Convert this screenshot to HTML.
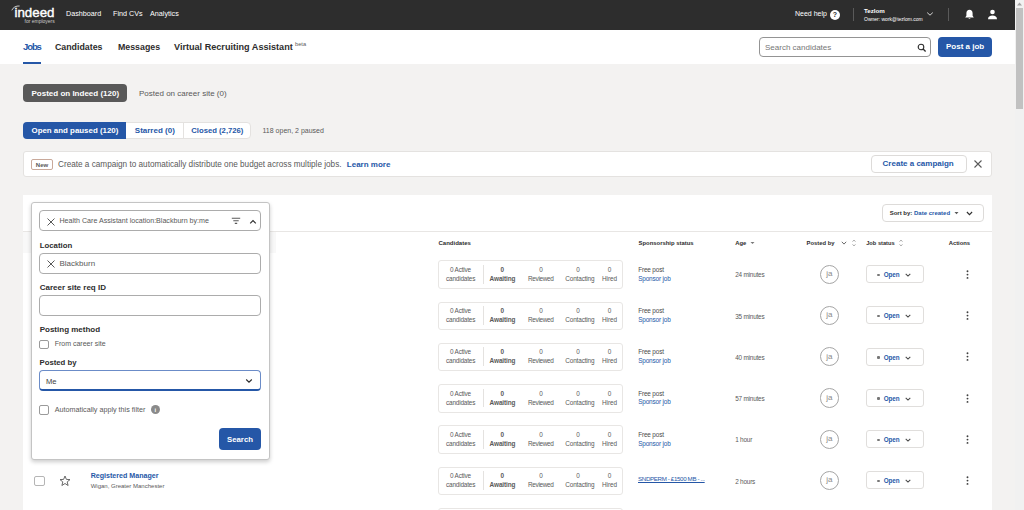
<!DOCTYPE html>
<html><head><meta charset="utf-8">
<style>
*{box-sizing:border-box;margin:0;padding:0}
html,body{width:1024px;height:510px;overflow:hidden;background:#f3f2f1;font-family:"Liberation Sans",sans-serif;color:#2d2d2d}
.a{position:absolute}
.t{position:absolute;white-space:nowrap;line-height:10px}
.b{font-weight:700}
.blue{color:#2557a7}
#hdr{left:0;top:0;width:1015px;height:30px;background:#2d2d2d}
#nav{left:0;top:30px;width:1015px;height:34px;background:#fff}
#sb{left:1015px;top:0;width:9px;height:510px;background:#f1f1f1}
#thumb{left:1016px;top:8px;width:7px;height:101px;background:#c1c1c1}
.card{background:#fff}
.inp{position:absolute;border:1px solid #acacac;border-radius:4px;background:#fff}
.cb{position:absolute;width:10px;height:10px;border:1px solid #9a9a9a;border-radius:2px;background:#fff}
.cbox{position:absolute;left:438px;width:185px;height:28.6px;border:1px solid #e8e6e4;border-radius:3px;background:#fff}
.cbox .t{font-size:6px;color:#595959}
.stat{position:absolute;left:866px;width:58px;height:18px;border:1px solid #e0dedc;border-radius:3px;background:#fff}
.av{position:absolute;left:819.7px;width:19.3px;height:19.3px;border:1px solid #a5a5a5;border-radius:50%;background:#fff}
</style></head><body>
<!-- header -->
<div class="a" id="hdr"></div>
<div class="t" style="left:14.5px;top:4.8px;font-size:13.3px;line-height:16px;color:#fff;-webkit-text-stroke:0.4px #fff">indeed</div>
<div class="t" style="left:24.5px;top:17px;font-size:5px;line-height:8px;color:#ccc">for employers</div>
<div class="t" style="left:66px;top:9px;font-size:7.2px;color:#fff">Dashboard</div>
<div class="t" style="left:113px;top:9px;font-size:7.2px;color:#fff">Find CVs</div>
<div class="t" style="left:150px;top:9px;font-size:7.2px;color:#fff">Analytics</div>
<div class="t" style="left:795px;top:9px;font-size:7px;color:#fff">Need help</div>
<div class="a" style="left:830px;top:10px;width:10px;height:10px;border-radius:50%;background:#fff"></div>
<div class="t b" style="left:830px;top:10px;width:10px;font-size:7px;color:#2d2d2d;text-align:center">?</div>
<div class="a" style="left:853px;top:8px;width:1px;height:12.5px;background:#5a5a5a"></div>
<div class="t b" style="left:864px;top:6.2px;font-size:6.2px;color:#fff">Tezlom</div>
<div class="t" style="left:864px;top:13.8px;font-size:5px;color:#fff">Owner: work@tezlom.com</div>
<div class="a" style="left:947.5px;top:8px;width:1px;height:12.5px;background:#5a5a5a"></div>


<!-- header icons -->
<svg class="a" style="left:926px;top:11px" width="8" height="6" viewBox="0 0 8 6"><path d="M1.2 1.6L4 4.2L6.8 1.6" stroke="#fff" stroke-width="0.8" fill="none"/></svg>
<svg class="a" style="left:964px;top:9px" width="11" height="11" viewBox="0 0 11 11"><path d="M5.5 0.8C3.6 0.8 2.4 2.2 2.4 4.2V6.8L1.2 8.4H9.8L8.6 6.8V4.2C8.6 2.2 7.4 0.8 5.5 0.8Z" fill="#fff"/><path d="M4.3 9.2Q5.5 10.6 6.7 9.2Z" fill="#fff"/></svg>
<svg class="a" style="left:987px;top:9px" width="11" height="11" viewBox="0 0 11 11"><circle cx="5.5" cy="3" r="2.3" fill="#fff"/><path d="M1 10.2C1 7.6 2.8 6.4 5.5 6.4C8.2 6.4 10 7.6 10 10.2Z" fill="#fff"/></svg>
<svg class="a" style="left:10px;top:4px" width="12" height="8" viewBox="0 0 12 8"><path d="M1.8 6.3Q4 1.6 9.6 2" stroke="#ddd" stroke-width="0.9" fill="none"/></svg>

<!-- nav -->
<div class="a" id="nav"></div>
<div class="t b blue" style="left:23px;top:41px;font-size:9.5px;line-height:12px;letter-spacing:-1.1px">Jobs</div>
<div class="a" style="left:23px;top:62px;width:18px;height:2px;background:#2557a7"></div>
<div class="t b" style="left:55px;top:41px;font-size:8.8px;line-height:12px">Candidates</div>
<div class="t b" style="left:118px;top:41px;font-size:8.8px;line-height:12px">Messages</div>
<div class="t b" style="left:174px;top:41px;font-size:9.1px;line-height:12px">Virtual Recruiting Assistant</div>
<div class="t" style="left:295px;top:40.5px;font-size:5.7px;line-height:6px;color:#595959">beta</div>
<div class="inp" style="left:759px;top:37px;width:172px;height:20px;border-color:#949494"></div>
<div class="t" style="left:765px;top:42.7px;font-size:8px;color:#767676">Search candidates</div>
<svg class="a" style="left:916.5px;top:42.5px" width="10" height="10" viewBox="0 0 10 10"><circle cx="4" cy="4" r="2.8" stroke="#2d2d2d" stroke-width="1.1" fill="none"/><path d="M6.1 6.1L8.6 8.6" stroke="#2d2d2d" stroke-width="1.4"/></svg>
<div class="a" style="left:938px;top:37px;width:54px;height:20px;border-radius:4px;background:#2557a7"></div>
<div class="t b" style="left:946px;top:42.4px;font-size:8px;color:#fff">Post a job</div>


<!-- posted tabs -->
<div class="a" style="left:23px;top:84px;width:104px;height:18px;border-radius:4px;background:#595959"></div>
<div class="t b" style="left:31.5px;top:88.6px;font-size:8px;color:#fff">Posted on Indeed (120)</div>
<div class="t" style="left:139px;top:88.6px;font-size:8px;color:#595959">Posted on career site (0)</div>

<!-- segmented -->
<div class="a" style="left:23px;top:122px;width:228px;height:17px;border:1px solid #e4e2e0;border-radius:4px;background:#fff"></div>
<div class="a" style="left:23px;top:122px;width:103px;height:17px;border-radius:4px 0 0 4px;background:#2557a7"></div>
<div class="a" style="left:183px;top:123px;width:1px;height:15px;background:#e4e2e0"></div>
<div class="t b" style="left:31.5px;top:125.5px;font-size:7.9px;color:#fff">Open and paused (120)</div>
<div class="t b blue" style="left:134.8px;top:125.5px;font-size:8px">Starred (0)</div>
<div class="t b blue" style="left:191.3px;top:125.5px;font-size:7.7px">Closed (2,726)</div>
<div class="t" style="left:262.5px;top:125.7px;font-size:7px;color:#595959">118 open, 2 paused</div>

<!-- banner -->
<div class="a" style="left:23px;top:151px;width:969px;height:26px;border:1px solid #e4e2e0;border-radius:3px;background:#fff"></div>
<div class="a" style="left:31px;top:158.5px;width:22px;height:11.5px;border:1px solid #c9a99a;border-radius:2px;background:#fff"></div>
<div class="t" style="left:31px;top:160px;width:22px;font-size:6px;font-weight:700;color:#595959;text-align:center">New</div>
<div class="t" style="left:58px;top:159.6px;font-size:8.2px;color:#595959">Create a campaign to automatically distribute one budget across multiple jobs.</div>
<div class="t b blue" style="left:346.8px;top:159.6px;font-size:8px">Learn more</div>
<div class="a" style="left:870.5px;top:155px;width:96px;height:18px;border:1px solid #dddbd9;border-radius:4px;background:#fff"></div>
<div class="t b blue" style="left:882.6px;top:158.8px;font-size:8px">Create a campaign</div>
<svg class="a" style="left:973px;top:159px" width="10" height="10" viewBox="0 0 10 10"><path d="M1.5 1.5L8.5 8.5M8.5 1.5L1.5 8.5" stroke="#595959" stroke-width="1.1"/></svg>

<!-- main card -->
<div class="a card" style="left:23px;top:195px;width:969px;height:320px"></div>
<div class="a" style="left:881.5px;top:204px;width:102.5px;height:17.5px;border:1px solid #dddbd9;border-radius:4px;background:#fff"></div>
<div class="t b" style="left:889.7px;top:207.8px;font-size:6px"><span>Sort by:</span> <span class="blue">Date created</span></div>
<svg class="a" style="left:953.5px;top:211px" width="5" height="4" viewBox="0 0 5 4"><path d="M0.5 1L4.5 1L2.5 3.2Z" fill="#595959"/></svg>
<svg class="a" style="left:966.2px;top:210.8px" width="7" height="5" viewBox="0 0 7 5"><path d="M0.9 1L3.5 3.7L6.1 1" stroke="#2d2d2d" stroke-width="1.1" fill="none"/></svg>
<div class="a" style="left:23px;top:231px;width:969px;height:1px;background:#e8e6e4"></div>
<div class="a" style="left:23px;top:232px;width:253px;height:21px;background:#f8f8f8"></div>

<!-- table header -->
<div class="t b" style="left:438.5px;top:237.8px;font-size:6px">Candidates</div>
<div class="t b" style="left:638.6px;top:237.8px;font-size:5.9px">Sponsorship status</div>
<div class="t b" style="left:735.2px;top:237.8px;font-size:5.9px">Age</div>
<svg class="a" style="left:750px;top:241px" width="5" height="4" viewBox="0 0 5 4"><path d="M0.5 1L4.5 1L2.5 3Z" fill="#767676"/></svg>
<div class="t b" style="left:806.6px;top:237.8px;font-size:5.85px">Posted by</div>
<svg class="a" style="left:840.5px;top:240.5px" width="6" height="4" viewBox="0 0 6 4"><path d="M0.8 0.8L3 3.1L5.2 0.8" stroke="#595959" stroke-width="0.9" fill="none"/></svg>
<svg class="a" style="left:852px;top:238.5px" width="4" height="8" viewBox="0 0 4 8"><path d="M0.6 2.6L2 1.1L3.4 2.6M0.6 5.4L2 6.9L3.4 5.4" stroke="#8a8a8a" stroke-width="0.8" fill="none"/></svg>
<div class="t b" style="left:866.2px;top:237.8px;font-size:5.7px">Job status</div>
<svg class="a" style="left:899px;top:238.5px" width="4" height="8" viewBox="0 0 4 8"><path d="M0.6 2.6L2 1.1L3.4 2.6M0.6 5.4L2 6.9L3.4 5.4" stroke="#8a8a8a" stroke-width="0.8" fill="none"/></svg>
<div class="t b" style="left:948.7px;top:237.8px;font-size:5.85px">Actions</div>


<!-- rows -->
<div class="cbox" style="top:260.30px"><div class="t" style="left:11.0px;top:3.7px;font-size:6.4px;letter-spacing:-0.18px">0 Active</div><div class="t" style="left:7.0px;top:12.6px;font-size:6.4px;letter-spacing:-0.17px">candidates</div><div class="a" style="left:43.7px;top:3.7px;width:1px;height:18.6px;background:#e4e2e0"></div><div class="t b" style="left:61.5px;top:3.7px;font-size:6.4px;letter-spacing:0px">0</div><div class="t b" style="left:50.6px;top:12.6px;font-size:6.4px;letter-spacing:-0.09px">Awaiting</div><div class="t" style="left:100.3px;top:3.7px;font-size:6.4px;letter-spacing:0px">0</div><div class="t" style="left:89.0px;top:12.6px;font-size:6.4px;letter-spacing:-0.31px">Reviewed</div><div class="t" style="left:137.3px;top:3.7px;font-size:6.4px;letter-spacing:0px">0</div><div class="t" style="left:126.3px;top:12.6px;font-size:6.4px;letter-spacing:-0.14px">Contacting</div><div class="t" style="left:168.8px;top:3.7px;font-size:6.4px;letter-spacing:0px">0</div><div class="t" style="left:162.9px;top:12.6px;font-size:6.4px;letter-spacing:-0.02px">Hired</div></div>
<div class="t" style="left:638.2px;top:264.80px;font-size:6.4px;letter-spacing:-0.15px;color:#4b4b4b">Free post</div>
<div class="t blue" style="left:638.2px;top:273.50px;font-size:6.4px;letter-spacing:-0.15px">Sponsor job</div>
<div class="t" style="left:735.2px;top:270.30px;font-size:6.4px;letter-spacing:-0.2px;color:#595959">24 minutes</div>
<div class="av" style="top:264.60px"></div>
<div class="t" style="left:819.7px;width:19.3px;top:269.20px;font-size:8px;color:#8a8a8a;text-align:center">ja</div>
<div class="stat" style="top:265.10px"></div>
<div class="a" style="left:877px;top:273.50px;width:2.6px;height:2.6px;background:#777;border-radius:1px"></div>
<div class="t b blue" style="left:883.75px;top:270.00px;font-size:6.3px;letter-spacing:-0.1px">Open</div>
<svg class="a" style="left:904.5px;top:273.00px" width="6" height="4" viewBox="0 0 6 4"><path d="M0.7 0.9L3 3.1L5.3 0.9" stroke="#4a4a4a" stroke-width="1.1" fill="none"/></svg>
<svg class="a" style="left:966px;top:269.80px" width="3" height="10" viewBox="0 0 3 10"><circle cx="1.5" cy="1.3" r="0.95" fill="#404040"/><circle cx="1.5" cy="4.6" r="0.95" fill="#404040"/><circle cx="1.5" cy="7.9" r="0.95" fill="#404040"/></svg>
<div class="cbox" style="top:301.55px"><div class="t" style="left:11.0px;top:3.7px;font-size:6.4px;letter-spacing:-0.18px">0 Active</div><div class="t" style="left:7.0px;top:12.6px;font-size:6.4px;letter-spacing:-0.17px">candidates</div><div class="a" style="left:43.7px;top:3.7px;width:1px;height:18.6px;background:#e4e2e0"></div><div class="t b" style="left:61.5px;top:3.7px;font-size:6.4px;letter-spacing:0px">0</div><div class="t b" style="left:50.6px;top:12.6px;font-size:6.4px;letter-spacing:-0.09px">Awaiting</div><div class="t" style="left:100.3px;top:3.7px;font-size:6.4px;letter-spacing:0px">0</div><div class="t" style="left:89.0px;top:12.6px;font-size:6.4px;letter-spacing:-0.31px">Reviewed</div><div class="t" style="left:137.3px;top:3.7px;font-size:6.4px;letter-spacing:0px">0</div><div class="t" style="left:126.3px;top:12.6px;font-size:6.4px;letter-spacing:-0.14px">Contacting</div><div class="t" style="left:168.8px;top:3.7px;font-size:6.4px;letter-spacing:0px">0</div><div class="t" style="left:162.9px;top:12.6px;font-size:6.4px;letter-spacing:-0.02px">Hired</div></div>
<div class="t" style="left:638.2px;top:306.05px;font-size:6.4px;letter-spacing:-0.15px;color:#4b4b4b">Free post</div>
<div class="t blue" style="left:638.2px;top:314.75px;font-size:6.4px;letter-spacing:-0.15px">Sponsor job</div>
<div class="t" style="left:735.2px;top:311.55px;font-size:6.4px;letter-spacing:-0.2px;color:#595959">35 minutes</div>
<div class="av" style="top:305.85px"></div>
<div class="t" style="left:819.7px;width:19.3px;top:310.45px;font-size:8px;color:#8a8a8a;text-align:center">ja</div>
<div class="stat" style="top:306.35px"></div>
<div class="a" style="left:877px;top:314.75px;width:2.6px;height:2.6px;background:#777;border-radius:1px"></div>
<div class="t b blue" style="left:883.75px;top:311.25px;font-size:6.3px;letter-spacing:-0.1px">Open</div>
<svg class="a" style="left:904.5px;top:314.25px" width="6" height="4" viewBox="0 0 6 4"><path d="M0.7 0.9L3 3.1L5.3 0.9" stroke="#4a4a4a" stroke-width="1.1" fill="none"/></svg>
<svg class="a" style="left:966px;top:311.05px" width="3" height="10" viewBox="0 0 3 10"><circle cx="1.5" cy="1.3" r="0.95" fill="#404040"/><circle cx="1.5" cy="4.6" r="0.95" fill="#404040"/><circle cx="1.5" cy="7.9" r="0.95" fill="#404040"/></svg>
<div class="cbox" style="top:342.80px"><div class="t" style="left:11.0px;top:3.7px;font-size:6.4px;letter-spacing:-0.18px">0 Active</div><div class="t" style="left:7.0px;top:12.6px;font-size:6.4px;letter-spacing:-0.17px">candidates</div><div class="a" style="left:43.7px;top:3.7px;width:1px;height:18.6px;background:#e4e2e0"></div><div class="t b" style="left:61.5px;top:3.7px;font-size:6.4px;letter-spacing:0px">0</div><div class="t b" style="left:50.6px;top:12.6px;font-size:6.4px;letter-spacing:-0.09px">Awaiting</div><div class="t" style="left:100.3px;top:3.7px;font-size:6.4px;letter-spacing:0px">0</div><div class="t" style="left:89.0px;top:12.6px;font-size:6.4px;letter-spacing:-0.31px">Reviewed</div><div class="t" style="left:137.3px;top:3.7px;font-size:6.4px;letter-spacing:0px">0</div><div class="t" style="left:126.3px;top:12.6px;font-size:6.4px;letter-spacing:-0.14px">Contacting</div><div class="t" style="left:168.8px;top:3.7px;font-size:6.4px;letter-spacing:0px">0</div><div class="t" style="left:162.9px;top:12.6px;font-size:6.4px;letter-spacing:-0.02px">Hired</div></div>
<div class="t" style="left:638.2px;top:347.30px;font-size:6.4px;letter-spacing:-0.15px;color:#4b4b4b">Free post</div>
<div class="t blue" style="left:638.2px;top:356.00px;font-size:6.4px;letter-spacing:-0.15px">Sponsor job</div>
<div class="t" style="left:735.2px;top:352.80px;font-size:6.4px;letter-spacing:-0.2px;color:#595959">40 minutes</div>
<div class="av" style="top:347.10px"></div>
<div class="t" style="left:819.7px;width:19.3px;top:351.70px;font-size:8px;color:#8a8a8a;text-align:center">ja</div>
<div class="stat" style="top:347.60px"></div>
<div class="a" style="left:877px;top:356.00px;width:2.6px;height:2.6px;background:#777;border-radius:1px"></div>
<div class="t b blue" style="left:883.75px;top:352.50px;font-size:6.3px;letter-spacing:-0.1px">Open</div>
<svg class="a" style="left:904.5px;top:355.50px" width="6" height="4" viewBox="0 0 6 4"><path d="M0.7 0.9L3 3.1L5.3 0.9" stroke="#4a4a4a" stroke-width="1.1" fill="none"/></svg>
<svg class="a" style="left:966px;top:352.30px" width="3" height="10" viewBox="0 0 3 10"><circle cx="1.5" cy="1.3" r="0.95" fill="#404040"/><circle cx="1.5" cy="4.6" r="0.95" fill="#404040"/><circle cx="1.5" cy="7.9" r="0.95" fill="#404040"/></svg>
<div class="cbox" style="top:384.05px"><div class="t" style="left:11.0px;top:3.7px;font-size:6.4px;letter-spacing:-0.18px">0 Active</div><div class="t" style="left:7.0px;top:12.6px;font-size:6.4px;letter-spacing:-0.17px">candidates</div><div class="a" style="left:43.7px;top:3.7px;width:1px;height:18.6px;background:#e4e2e0"></div><div class="t b" style="left:61.5px;top:3.7px;font-size:6.4px;letter-spacing:0px">0</div><div class="t b" style="left:50.6px;top:12.6px;font-size:6.4px;letter-spacing:-0.09px">Awaiting</div><div class="t" style="left:100.3px;top:3.7px;font-size:6.4px;letter-spacing:0px">0</div><div class="t" style="left:89.0px;top:12.6px;font-size:6.4px;letter-spacing:-0.31px">Reviewed</div><div class="t" style="left:137.3px;top:3.7px;font-size:6.4px;letter-spacing:0px">0</div><div class="t" style="left:126.3px;top:12.6px;font-size:6.4px;letter-spacing:-0.14px">Contacting</div><div class="t" style="left:168.8px;top:3.7px;font-size:6.4px;letter-spacing:0px">0</div><div class="t" style="left:162.9px;top:12.6px;font-size:6.4px;letter-spacing:-0.02px">Hired</div></div>
<div class="t" style="left:638.2px;top:388.55px;font-size:6.4px;letter-spacing:-0.15px;color:#4b4b4b">Free post</div>
<div class="t blue" style="left:638.2px;top:397.25px;font-size:6.4px;letter-spacing:-0.15px">Sponsor job</div>
<div class="t" style="left:735.2px;top:394.05px;font-size:6.4px;letter-spacing:-0.2px;color:#595959">57 minutes</div>
<div class="av" style="top:388.35px"></div>
<div class="t" style="left:819.7px;width:19.3px;top:392.95px;font-size:8px;color:#8a8a8a;text-align:center">ja</div>
<div class="stat" style="top:388.85px"></div>
<div class="a" style="left:877px;top:397.25px;width:2.6px;height:2.6px;background:#777;border-radius:1px"></div>
<div class="t b blue" style="left:883.75px;top:393.75px;font-size:6.3px;letter-spacing:-0.1px">Open</div>
<svg class="a" style="left:904.5px;top:396.75px" width="6" height="4" viewBox="0 0 6 4"><path d="M0.7 0.9L3 3.1L5.3 0.9" stroke="#4a4a4a" stroke-width="1.1" fill="none"/></svg>
<svg class="a" style="left:966px;top:393.55px" width="3" height="10" viewBox="0 0 3 10"><circle cx="1.5" cy="1.3" r="0.95" fill="#404040"/><circle cx="1.5" cy="4.6" r="0.95" fill="#404040"/><circle cx="1.5" cy="7.9" r="0.95" fill="#404040"/></svg>
<div class="cbox" style="top:425.30px"><div class="t" style="left:11.0px;top:3.7px;font-size:6.4px;letter-spacing:-0.18px">0 Active</div><div class="t" style="left:7.0px;top:12.6px;font-size:6.4px;letter-spacing:-0.17px">candidates</div><div class="a" style="left:43.7px;top:3.7px;width:1px;height:18.6px;background:#e4e2e0"></div><div class="t b" style="left:61.5px;top:3.7px;font-size:6.4px;letter-spacing:0px">0</div><div class="t b" style="left:50.6px;top:12.6px;font-size:6.4px;letter-spacing:-0.09px">Awaiting</div><div class="t" style="left:100.3px;top:3.7px;font-size:6.4px;letter-spacing:0px">0</div><div class="t" style="left:89.0px;top:12.6px;font-size:6.4px;letter-spacing:-0.31px">Reviewed</div><div class="t" style="left:137.3px;top:3.7px;font-size:6.4px;letter-spacing:0px">0</div><div class="t" style="left:126.3px;top:12.6px;font-size:6.4px;letter-spacing:-0.14px">Contacting</div><div class="t" style="left:168.8px;top:3.7px;font-size:6.4px;letter-spacing:0px">0</div><div class="t" style="left:162.9px;top:12.6px;font-size:6.4px;letter-spacing:-0.02px">Hired</div></div>
<div class="t" style="left:638.2px;top:429.80px;font-size:6.4px;letter-spacing:-0.15px;color:#4b4b4b">Free post</div>
<div class="t blue" style="left:638.2px;top:438.50px;font-size:6.4px;letter-spacing:-0.15px">Sponsor job</div>
<div class="t" style="left:735.2px;top:435.30px;font-size:6.4px;letter-spacing:-0.2px;color:#595959">1 hour</div>
<div class="av" style="top:429.60px"></div>
<div class="t" style="left:819.7px;width:19.3px;top:434.20px;font-size:8px;color:#8a8a8a;text-align:center">ja</div>
<div class="stat" style="top:430.10px"></div>
<div class="a" style="left:877px;top:438.50px;width:2.6px;height:2.6px;background:#777;border-radius:1px"></div>
<div class="t b blue" style="left:883.75px;top:435.00px;font-size:6.3px;letter-spacing:-0.1px">Open</div>
<svg class="a" style="left:904.5px;top:438.00px" width="6" height="4" viewBox="0 0 6 4"><path d="M0.7 0.9L3 3.1L5.3 0.9" stroke="#4a4a4a" stroke-width="1.1" fill="none"/></svg>
<svg class="a" style="left:966px;top:434.80px" width="3" height="10" viewBox="0 0 3 10"><circle cx="1.5" cy="1.3" r="0.95" fill="#404040"/><circle cx="1.5" cy="4.6" r="0.95" fill="#404040"/><circle cx="1.5" cy="7.9" r="0.95" fill="#404040"/></svg>
<div class="cbox" style="top:466.55px"><div class="t" style="left:11.0px;top:3.7px;font-size:6.4px;letter-spacing:-0.18px">0 Active</div><div class="t" style="left:7.0px;top:12.6px;font-size:6.4px;letter-spacing:-0.17px">candidates</div><div class="a" style="left:43.7px;top:3.7px;width:1px;height:18.6px;background:#e4e2e0"></div><div class="t b" style="left:61.5px;top:3.7px;font-size:6.4px;letter-spacing:0px">0</div><div class="t b" style="left:50.6px;top:12.6px;font-size:6.4px;letter-spacing:-0.09px">Awaiting</div><div class="t" style="left:100.3px;top:3.7px;font-size:6.4px;letter-spacing:0px">0</div><div class="t" style="left:89.0px;top:12.6px;font-size:6.4px;letter-spacing:-0.31px">Reviewed</div><div class="t" style="left:137.3px;top:3.7px;font-size:6.4px;letter-spacing:0px">0</div><div class="t" style="left:126.3px;top:12.6px;font-size:6.4px;letter-spacing:-0.14px">Contacting</div><div class="t" style="left:168.8px;top:3.7px;font-size:6.4px;letter-spacing:0px">0</div><div class="t" style="left:162.9px;top:12.6px;font-size:6.4px;letter-spacing:-0.02px">Hired</div></div>
<div class="t blue" style="left:638px;top:473.8px;font-size:6.2px;letter-spacing:-0.36px;text-decoration:underline;text-underline-offset:0.5px">SNDPERM - £1500 MB - ...</div>
<div class="t" style="left:735.2px;top:476.55px;font-size:6.4px;letter-spacing:-0.2px;color:#595959">2 hours</div>
<div class="av" style="top:470.85px"></div>
<div class="t" style="left:819.7px;width:19.3px;top:475.45px;font-size:8px;color:#8a8a8a;text-align:center">ja</div>
<div class="stat" style="top:471.35px"></div>
<div class="a" style="left:877px;top:479.75px;width:2.6px;height:2.6px;background:#777;border-radius:1px"></div>
<div class="t b blue" style="left:883.75px;top:476.25px;font-size:6.3px;letter-spacing:-0.1px">Open</div>
<svg class="a" style="left:904.5px;top:479.25px" width="6" height="4" viewBox="0 0 6 4"><path d="M0.7 0.9L3 3.1L5.3 0.9" stroke="#4a4a4a" stroke-width="1.1" fill="none"/></svg>
<svg class="a" style="left:966px;top:476.05px" width="3" height="10" viewBox="0 0 3 10"><circle cx="1.5" cy="1.3" r="0.95" fill="#404040"/><circle cx="1.5" cy="4.6" r="0.95" fill="#404040"/><circle cx="1.5" cy="7.9" r="0.95" fill="#404040"/></svg>
<div class="cbox" style="top:507.80px"><div class="t" style="left:11.0px;top:3.7px;font-size:6.4px;letter-spacing:-0.18px">0 Active</div><div class="t" style="left:7.0px;top:12.6px;font-size:6.4px;letter-spacing:-0.17px">candidates</div><div class="a" style="left:43.7px;top:3.7px;width:1px;height:18.6px;background:#e4e2e0"></div><div class="t b" style="left:61.5px;top:3.7px;font-size:6.4px;letter-spacing:0px">0</div><div class="t b" style="left:50.6px;top:12.6px;font-size:6.4px;letter-spacing:-0.09px">Awaiting</div><div class="t" style="left:100.3px;top:3.7px;font-size:6.4px;letter-spacing:0px">0</div><div class="t" style="left:89.0px;top:12.6px;font-size:6.4px;letter-spacing:-0.31px">Reviewed</div><div class="t" style="left:137.3px;top:3.7px;font-size:6.4px;letter-spacing:0px">0</div><div class="t" style="left:126.3px;top:12.6px;font-size:6.4px;letter-spacing:-0.14px">Contacting</div><div class="t" style="left:168.8px;top:3.7px;font-size:6.4px;letter-spacing:0px">0</div><div class="t" style="left:162.9px;top:12.6px;font-size:6.4px;letter-spacing:-0.02px">Hired</div></div>
<div class="cb" style="left:34.2px;top:475.8px;width:10.6px;height:10px;border-color:#b5b5b5"></div>
<svg class="a" style="left:58.5px;top:474.5px" width="12" height="12" viewBox="0 0 12 12"><path d="M6 1L7.4 4.4L11 4.6L8.2 6.9L9.1 10.5L6 8.5L2.9 10.5L3.8 6.9L1 4.6L4.6 4.4Z" stroke="#595959" stroke-width="0.9" fill="none" stroke-linejoin="round"/></svg>
<div class="t b blue" style="left:90.7px;top:471.3px;font-size:7.1px">Registered Manager</div>
<div class="t" style="left:90.7px;top:480.7px;font-size:6px;color:#595959">Wigan, Greater Manchester</div>

<!-- popup -->
<div class="a" style="left:31px;top:202.3px;width:238.6px;height:257.3px;border:1px solid #c4c4c4;border-radius:3px;background:#fff;box-shadow:0 2px 4px rgba(0,0,0,0.2)"></div>
<div class="inp" style="left:39.2px;top:210.2px;width:222px;height:21.3px"></div>
<svg class="a" style="left:46px;top:216.5px" width="10" height="10" viewBox="0 0 10 10"><path d="M1.5 1.5L8.5 8.5M8.5 1.5L1.5 8.5" stroke="#595959" stroke-width="1"/></svg>
<div class="t" style="left:59.5px;top:215.5px;font-size:7.1px;color:#595959">Health Care Assistant location:Blackburn by:me</div>
<svg class="a" style="left:231px;top:217.4px" width="10" height="8" viewBox="0 0 10 8"><path d="M0.8 1.2H9.2M2.3 3.8H7.7M3.8 6.4H6.2" stroke="#595959" stroke-width="1.1"/></svg>
<svg class="a" style="left:248.5px;top:218.5px" width="8" height="6" viewBox="0 0 8 6"><path d="M1.2 4.3L4 1.5L6.8 4.3" stroke="#2d2d2d" stroke-width="1.15" fill="none"/></svg>
<div class="t b" style="left:39.7px;top:240.6px;font-size:7.8px">Location</div>
<div class="inp" style="left:39.2px;top:253px;width:222px;height:21px"></div>
<svg class="a" style="left:46px;top:258.5px" width="10" height="10" viewBox="0 0 10 10"><path d="M1.5 1.5L8.5 8.5M8.5 1.5L1.5 8.5" stroke="#595959" stroke-width="1"/></svg>
<div class="t" style="left:59.5px;top:258.6px;font-size:8px;color:#595959">Blackburn</div>
<div class="t b" style="left:39.7px;top:283.3px;font-size:8px">Career site req ID</div>
<div class="inp" style="left:39.2px;top:295.3px;width:222px;height:21.2px"></div>
<div class="t b" style="left:39.7px;top:325.3px;font-size:8px">Posting method</div>
<div class="cb" style="left:39.2px;top:339.5px;width:9.8px;height:9.3px"></div>
<div class="t" style="left:54.7px;top:338.8px;font-size:7px;color:#595959">From career site</div>
<div class="t b" style="left:39.5px;top:357.5px;font-size:7.75px">Posted by</div>
<div class="a" style="left:39.2px;top:370.4px;width:222px;height:20.8px;border:1px solid #6b8cc8;border-bottom:2px solid #2557a7;border-radius:4px;background:#fff"></div>
<div class="t" style="left:45.9px;top:376.8px;font-size:7.6px;color:#3d3d3d">Me</div>
<svg class="a" style="left:244.5px;top:378px" width="8" height="6" viewBox="0 0 8 6"><path d="M1.2 1.5L4 4.2L6.8 1.5" stroke="#2d2d2d" stroke-width="1.1" fill="none"/></svg>
<div class="cb" style="left:39.2px;top:405px;width:9.8px;height:9.7px"></div>
<div class="t" style="left:54.7px;top:404.8px;font-size:7.2px;color:#595959">Automatically apply this filter</div>
<div class="a" style="left:150.7px;top:405.2px;width:9.3px;height:9.3px;border-radius:50%;background:#8a8a8a"></div>
<div class="t b" style="left:150.7px;width:9.3px;top:404.8px;font-size:6px;color:#fff;text-align:center">i</div>
<div class="a" style="left:218.8px;top:428.1px;width:42.4px;height:21.6px;border-radius:4px;background:#2557a7"></div>
<div class="t b" style="left:218.8px;width:42.4px;top:435px;font-size:7.8px;color:#fff;text-align:center">Search</div>

<div class="a" id="sb"></div>
<div class="a" id="thumb"></div>
<svg class="a" style="left:1015px;top:0px" width="9" height="8" viewBox="0 0 9 8"><path d="M2 5.5L4.5 2.5L7 5.5Z" fill="#a3a3a3"/></svg>

</body></html>
